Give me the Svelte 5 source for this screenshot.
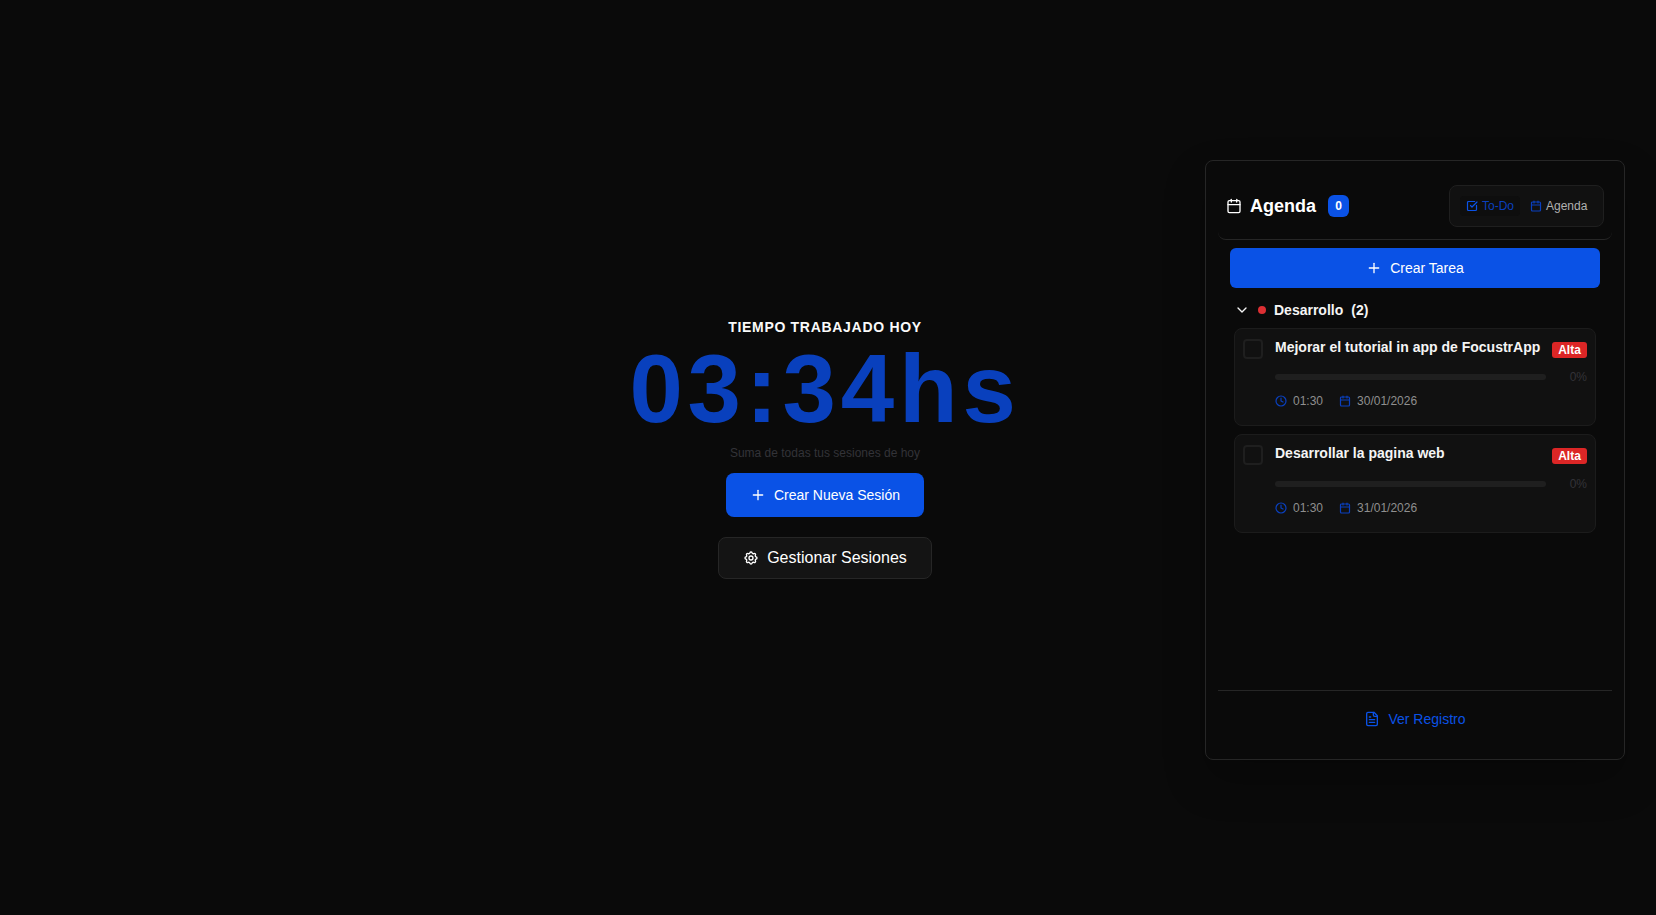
<script>
  const tasks = [
    { title: 'Mejorar el tutorial in app de FocustrApp', time: '01:30', date: '30/01/2026' },
    { title: 'Desarrollar la pagina web', time: '01:30', date: '31/01/2026' }
  ];
</script>

<div class="page">
  <main class="hero">
    <p class="eyebrow">TIEMPO TRABAJADO HOY</p>
    <h1 class="clock">03:34hs</h1>
    <p class="sub">Suma de todas tus sesiones de hoy</p>
    <button class="primary new">
      <svg class="ic" width="16" height="16" viewBox="0 0 24 24"><path d="M5 12h14"/><path d="M12 5v14"/></svg>
      Crear Nueva Sesión
    </button>
    <button class="manage">
      <svg class="ic" width="16" height="16" viewBox="0 0 24 24"><path d="M10.325 4.317c.426-1.756 2.924-1.756 3.35 0a1.724 1.724 0 0 0 2.573 1.066c1.543-.94 3.31.826 2.37 2.37a1.724 1.724 0 0 0 1.065 2.572c1.756.426 1.756 2.924 0 3.35a1.724 1.724 0 0 0-1.066 2.573c.94 1.543-.826 3.31-2.37 2.37a1.724 1.724 0 0 0-2.572 1.065c-.426 1.756-2.924 1.756-3.35 0a1.724 1.724 0 0 0-2.573-1.066c-1.543.94-3.31-.826-2.37-2.37a1.724 1.724 0 0 0-1.065-2.572c-1.756-.426-1.756-2.924 0-3.35a1.724 1.724 0 0 0 1.066-2.573c-.94-1.543.826-3.31 2.37-2.37 1 .608 2.296.07 2.572-1.065z"/><circle cx="12" cy="12" r="3"/></svg>
      Gestionar Sesiones
    </button>
  </main>

  <aside class="panel">
    <header class="head">
      <div class="title">
        <svg class="ic" width="16" height="16" viewBox="0 0 24 24"><path d="M8 2v4"/><path d="M16 2v4"/><rect width="18" height="18" x="3" y="4" rx="2"/><path d="M3 10h18"/></svg>
        <h2>Agenda</h2>
        <span class="count">0</span>
      </div>
      <div class="toggle">
        <span class="tab active">
          <svg class="ic small" width="12" height="12" viewBox="0 0 24 24"><path d="M21 10.656V19a2 2 0 0 1-2 2H5a2 2 0 0 1-2-2V5a2 2 0 0 1 2-2h12.344"/><path d="m9 11 3 3L22 4"/></svg>
          To-Do
        </span>
        <span class="tab">
          <svg class="ic small" width="12" height="12" viewBox="0 0 24 24"><path d="M8 2v4"/><path d="M16 2v4"/><rect width="18" height="18" x="3" y="4" rx="2"/><path d="M3 10h18"/></svg>
          Agenda
        </span>
      </div>
    </header>

    <div class="body">
      <button class="primary create">
        <svg class="ic" width="16" height="16" viewBox="0 0 24 24"><path d="M5 12h14"/><path d="M12 5v14"/></svg>
        Crear Tarea
      </button>

      <div class="group">
        <svg class="ic chev" width="16" height="16" viewBox="0 0 24 24"><path d="m6 9 6 6 6-6"/></svg>
        <span class="dot"></span>
        <span>Desarrollo</span>
        <span>(2)</span>
      </div>

      <div class="list">
        {#each tasks as t}
          <article class="card">
            <span class="check"></span>
            <div class="content">
              <div class="top">
                <span class="task-title">{t.title}</span>
                <span class="alta">Alta</span>
              </div>
              <div class="progress">
                <span class="bar"></span>
                <span class="pct">0%</span>
              </div>
              <div class="meta">
                <span class="m">
                  <svg class="ic small" width="12" height="12" viewBox="0 0 24 24"><circle cx="12" cy="12" r="10"/><path d="M12 6v6l4 2"/></svg>
                  {t.time}
                </span>
                <span class="m">
                  <svg class="ic small" width="12" height="12" viewBox="0 0 24 24"><path d="M8 2v4"/><path d="M16 2v4"/><rect width="18" height="18" x="3" y="4" rx="2"/><path d="M3 10h18"/></svg>
                  {t.date}
                </span>
              </div>
            </div>
          </article>
        {/each}
      </div>
    </div>

    <footer class="foot">
      <span class="log">
        <svg class="ic" width="16" height="16" viewBox="0 0 24 24"><path d="M15 2H6a2 2 0 0 0-2 2v16a2 2 0 0 0 2 2h12a2 2 0 0 0 2-2V7Z"/><path d="M14 2v4a2 2 0 0 0 2 2h4"/><path d="M10 9H8"/><path d="M16 13H8"/><path d="M16 17H8"/></svg>
        Ver Registro
      </span>
    </footer>
  </aside>
</div>

<style>
  :global(body) {
    margin: 0;
    background: #0a0a0a;
  }
  .page {
    position: relative;
    height: 915px;
    overflow: hidden;
    background: #0a0a0a;
    color: #fff;
    font-family: "Liberation Sans", Arial, sans-serif;
    display: flex;
    justify-content: center;
    padding-right: 6px;
    box-sizing: border-box;
  }
  .ic {
    fill: none;
    stroke: currentColor;
    stroke-width: 2;
    stroke-linecap: round;
    stroke-linejoin: round;
    flex: none;
  }
  .ic.small {
    stroke-width: 2.4;
  }
  button {
    font-family: inherit;
    border: 0;
    cursor: pointer;
  }
  .hero {
    display: flex;
    flex-direction: column;
    align-items: center;
    padding-top: 319px;
  }
  .eyebrow {
    margin: 0;
    font-size: 14px;
    line-height: 16px;
    font-weight: 700;
    letter-spacing: 0.7px;
    color: #fafafa;
  }
  .clock {
    margin: 6px 0 0;
    font-size: 96px;
    line-height: 96px;
    font-weight: 700;
    letter-spacing: 4.8px;
    color: #0940bd;
  }
  .sub {
    margin: 9px 0 0;
    font-size: 12px;
    line-height: 14px;
    color: #333338;
  }
  .primary {
    background: #0a52e6;
    color: #fff;
    display: flex;
    align-items: center;
    justify-content: center;
    gap: 8px;
    font-size: 14px;
  }
  .new {
    margin-top: 13px;
    width: 198px;
    height: 44px;
    border-radius: 8px;
  }
  .manage {
    margin-top: 20px;
    width: 214px;
    height: 42px;
    border-radius: 8px;
    background: #141414;
    border: 1px solid #262626;
    color: #fff;
    display: flex;
    align-items: center;
    justify-content: center;
    gap: 8px;
    font-size: 16px;
  }
  .panel {
    position: absolute;
    top: 160px;
    right: 31px;
    width: 420px;
    height: 600px;
    box-sizing: border-box;
    border: 1px solid #262626;
    border-radius: 8px;
    background: #0a0a0a;
    box-shadow: 0 20px 40px rgba(0, 0, 0, 0.25);
    padding: 12px;
    display: flex;
    flex-direction: column;
  }
  .head {
    height: 66px;
    padding: 0 8px;
    display: flex;
    align-items: center;
    justify-content: space-between;
    border-bottom: 1px solid #262626;
    border-radius: 0 0 8px 8px;
  }
  .title {
    display: flex;
    align-items: center;
    gap: 8px;
  }
  .title h2 {
    margin: 0;
    font-size: 18px;
    font-weight: 700;
  }
  .count {
    margin-left: 4px;
    width: 21px;
    height: 22px;
    border-radius: 6px;
    background: #0a52e6;
    display: flex;
    align-items: center;
    justify-content: center;
    font-size: 12px;
    font-weight: 700;
  }
  .toggle {
    width: 155px;
    height: 42px;
    box-sizing: border-box;
    border: 1px solid #1f1f1f;
    border-radius: 8px;
    background: #111;
    display: flex;
    align-items: center;
    padding: 0 10px;
    gap: 4px;
    white-space: nowrap;
  }
  .tab {
    display: flex;
    align-items: center;
    gap: 4px;
    font-size: 12px;
    height: 20px;
    padding: 0 6px;
    border-radius: 4px;
    color: #b0b0b0;
  }
  .tab .ic {
    color: #0a40bf;
  }
  .tab.active {
    background: #0e0e0e;
    color: #0a40bf;
  }
  .tab.active .ic {
    color: #0a52e6;
  }
  .body {
    flex: 1;
    padding: 8px 12px 0;
    display: flex;
    flex-direction: column;
  }
  .create {
    height: 40px;
    border-radius: 6px;
    width: 370px;
  }
  .group {
    margin-top: 12px;
    margin-left: 4px;
    height: 20px;
    display: flex;
    align-items: center;
    gap: 8px;
    font-size: 14px;
    font-weight: 700;
    color: #f5f5f5;
  }
  .dot {
    width: 8px;
    height: 8px;
    border-radius: 50%;
    background: #dc2f33;
  }
  .list {
    margin-top: 8px;
    margin-left: 4px;
    width: 362px;
    display: flex;
    flex-direction: column;
    gap: 8px;
  }
  .card {
    box-sizing: border-box;
    border: 1px solid #1c1c1c;
    border-radius: 8px;
    background: #111;
    padding: 10px 8px 0;
    display: flex;
    gap: 12px;
    height: 98px;
  }
  .card + .card {
    height: 99px;
  }
  .check {
    width: 20px;
    height: 20px;
    box-sizing: border-box;
    border: 2px solid #1f1f1f;
    border-radius: 4px;
    flex: none;
  }
  .content {
    flex: 1;
    min-width: 0;
  }
  .top {
    display: flex;
    justify-content: space-between;
    align-items: flex-start;
  }
  .task-title {
    font-size: 14px;
    line-height: 16px;
    font-weight: 700;
    color: #f5f5f5;
  }
  .alta {
    margin-top: 3px;
    width: 35px;
    height: 16px;
    border-radius: 3px;
    background: #dc2626;
    color: #fff;
    font-size: 12px;
    font-weight: 700;
    display: flex;
    align-items: center;
    justify-content: center;
  }
  .progress {
    margin-top: 12px;
    display: flex;
    align-items: center;
    justify-content: space-between;
  }
  .card + .card .progress {
    margin-top: 13px;
  }
  .bar {
    width: 271px;
    height: 6px;
    border-radius: 3px;
    background: #1f1f1f;
  }
  .pct {
    font-size: 12px;
    color: #333338;
  }
  .meta {
    margin-top: 10px;
    display: flex;
    gap: 16px;
  }
  .m {
    display: flex;
    align-items: center;
    gap: 6px;
    font-size: 12px;
    color: #8f8f8f;
  }
  .m .ic {
    color: #0a40bf;
  }
  .foot {
    border-top: 1px solid #262626;
    height: 56px;
    display: flex;
    align-items: center;
    justify-content: center;
  }
  .log {
    display: flex;
    align-items: center;
    gap: 8px;
    font-size: 14px;
    color: #0a52e6;
  }
</style>
